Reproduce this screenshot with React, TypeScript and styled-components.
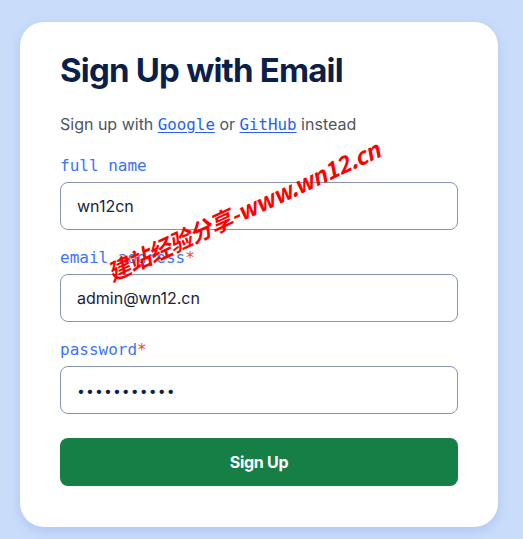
import styled, { createGlobalStyle } from "styled-components";

const GlobalStyle = createGlobalStyle`
  html, body {
    margin: 0;
    padding: 0;
    background: #c9ddfb;
  }
  body {
    font-family: Inter, "Noto Sans", sans-serif;
  }
  * {
    box-sizing: border-box;
  }
`;

const Page = styled.div`
  width: 523px;
  height: 539px;
  padding: 22px 25px 0 20px;
`;

const Card = styled.form`
  position: relative;
  width: 478px;
  background: #ffffff;
  border-radius: 24px;
  padding: 26px 40px 41px;
  box-shadow: 0 4px 12px rgba(90, 130, 200, 0.25);
  display: flex;
  flex-direction: column;
`;

const Title = styled.h1`
  margin: 0;
  font-size: 33px;
  font-weight: 700;
  letter-spacing: -0.8px;
  line-height: 44px;
  color: #0b1f4b;
`;

const Lead = styled.p`
  margin: 20px 0 0;
  font-size: 16px;
  line-height: 24px;
  color: #4b5563;
`;

const Mono = styled.a`
  font-family: "DejaVu Sans Mono", "Liberation Mono", monospace;
  font-size: 15.8px;
  color: #2563eb;
  text-decoration: underline;
  text-underline-offset: 2px;
`;

const Field = styled.div<{ $first?: boolean }>`
  display: flex;
  flex-direction: column;
  gap: 5px;
  margin-top: ${(p) => (p.$first ? "18px" : "17px")};
`;

const Label = styled.label`
  font-family: "DejaVu Sans Mono", "Liberation Mono", monospace;
  font-size: 16px;
  line-height: 22px;
  color: #3b74f6;
`;

const Star = styled.span`
  color: #f04438;
`;

const Input = styled.input`
  height: 48px;
  width: 100%;
  border: 1px solid #8795b4;
  border-radius: 8px;
  padding: 0 16px;
  font-family: Inter, "Noto Sans", sans-serif;
  font-size: 16px;
  color: #1a2238;
  background: #fff;
  outline: none;
  &[type="password"] {
    color: #0b1f4b;
    font-size: 14px;
    letter-spacing: 1.1px;
  }
`;

const Button = styled.button`
  margin-top: 24px;
  height: 48px;
  border: 0;
  border-radius: 8px;
  background: #157f45;
  color: #ffffff;
  font-family: Inter, "Noto Sans", sans-serif;
  font-size: 16px;
  font-weight: 700;
  letter-spacing: -0.3px;
  cursor: pointer;
`;

const Watermark = styled.div`
  position: absolute;
  left: 88px;
  top: 234px;
  transform: rotate(-25deg);
  transform-origin: left center;
  color: #ff0000;
  font-family: "Noto Sans CJK SC", "Noto Sans", sans-serif;
  font-size: 23px;
  font-weight: 700;
  font-style: italic;
  white-space: nowrap;
  pointer-events: none;
  letter-spacing: -0.5px;
`;

export default function App() {
  return (
    <Page>
      <GlobalStyle />
      <Card onSubmit={(e) => e.preventDefault()}>
        <Title>Sign Up with Email</Title>
        <Lead>
          Sign up with <Mono href="#">Google</Mono> or <Mono href="#">GitHub</Mono> instead
        </Lead>
        <Field $first>
          <Label>full name</Label>
          <Input defaultValue="wn12cn" />
        </Field>
        <Field>
          <Label>
            email address<Star>*</Star>
          </Label>
          <Input defaultValue="admin@wn12.cn" />
        </Field>
        <Field>
          <Label>
            password<Star>*</Star>
          </Label>
          <Input type="password" defaultValue="wn12cnpass1" />
        </Field>
        <Button type="submit">Sign Up</Button>
        <Watermark>建站经验分享-www.wn12.cn</Watermark>
      </Card>
    </Page>
  );
}
